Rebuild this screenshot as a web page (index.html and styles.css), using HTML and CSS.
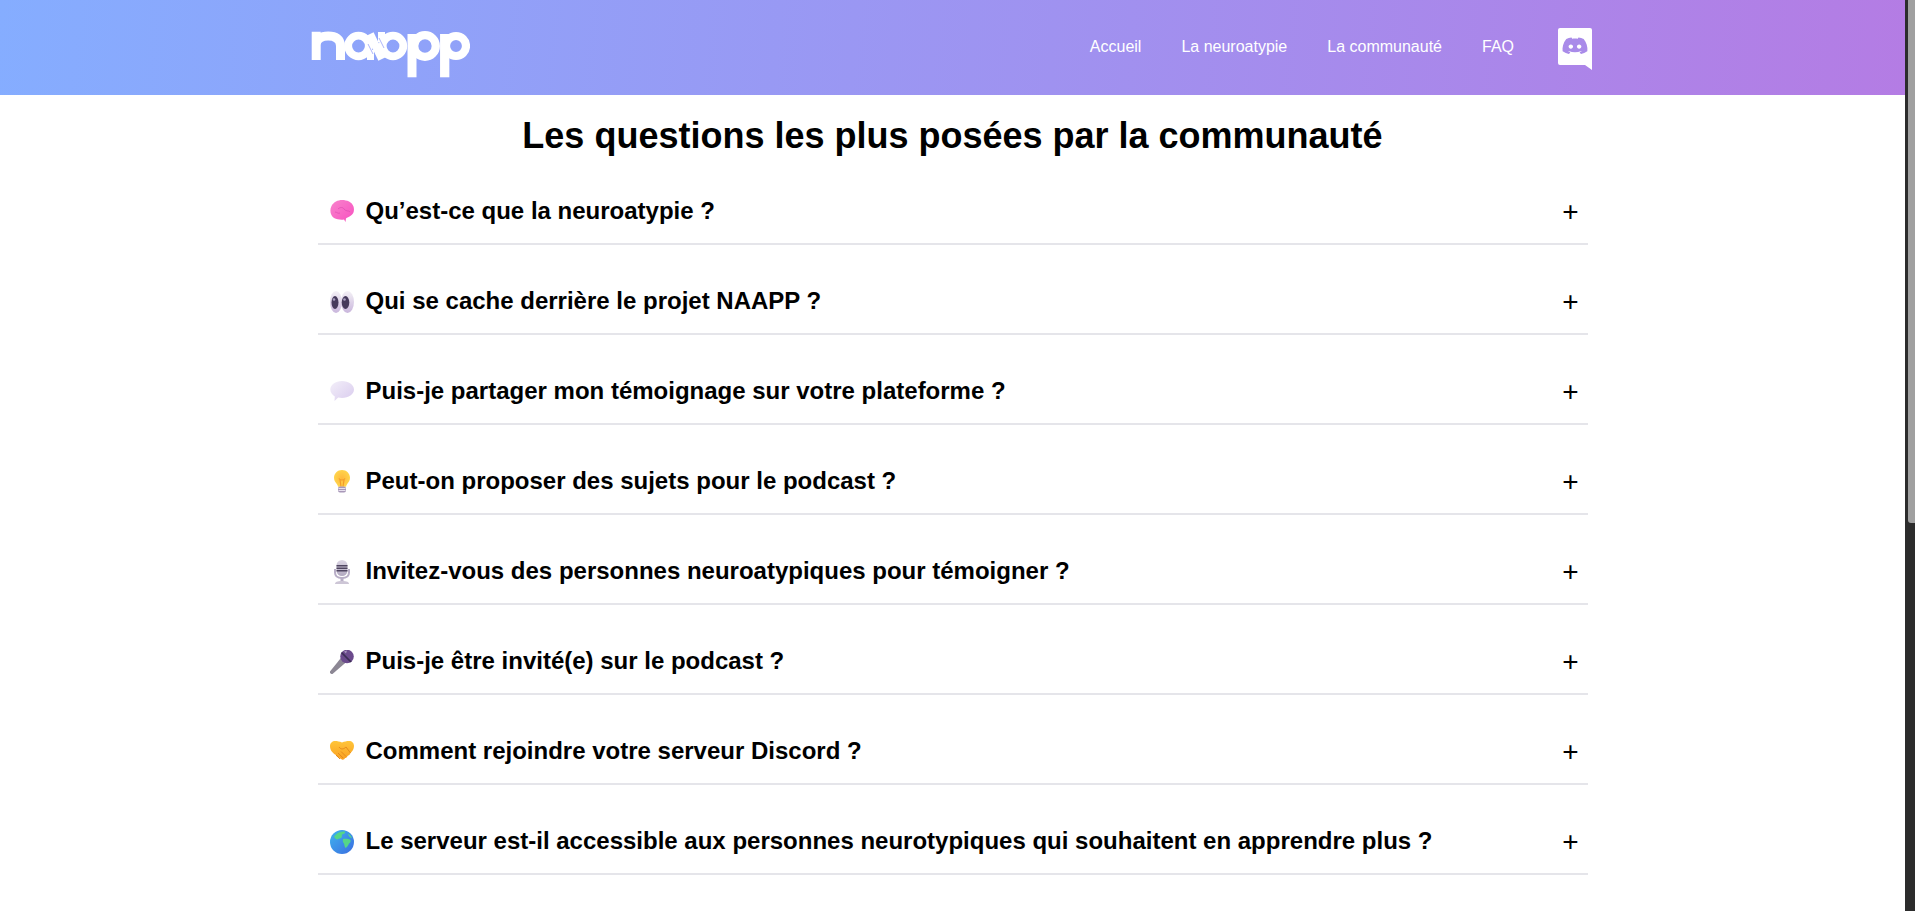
FILE: index.html
```html
<!DOCTYPE html>
<html lang="fr">
<head>
<meta charset="utf-8">
<title>NAAPP - FAQ</title>
<link rel="stylesheet" href="styles.css">
</head>
<body>
<svg class="defs" width="0" height="0" aria-hidden="true">
  <defs>
    <linearGradient id="gBrain" x1="0" y1="0" x2="1" y2="1"><stop offset="0" stop-color="#f884cc"/><stop offset="1" stop-color="#f850c0"/></linearGradient>
    <linearGradient id="gEye" x1="0" y1="0" x2="0" y2="1"><stop offset="0" stop-color="#f4f1f6"/><stop offset="1" stop-color="#c9b6dc"/></linearGradient>
    <linearGradient id="gBubble" x1="0" y1="0" x2="1" y2="1"><stop offset="0" stop-color="#f3eff9"/><stop offset="1" stop-color="#d9cbee"/></linearGradient>
    <radialGradient id="gBulb" cx=".5" cy=".5" r=".6"><stop offset="0" stop-color="#ffb93c"/><stop offset="1" stop-color="#ffd94f"/></radialGradient>
    <linearGradient id="gMic" x1="0" y1="0" x2="0" y2="1"><stop offset="0" stop-color="#dcd6e4"/><stop offset="1" stop-color="#b1a8bf"/></linearGradient>
    <linearGradient id="gHand" x1="0" y1="0" x2="0" y2="1"><stop offset="0" stop-color="#ffc53a"/><stop offset="1" stop-color="#f99f20"/></linearGradient>
    <linearGradient id="gSea" x1="0" y1="0" x2="1" y2="1"><stop offset="0" stop-color="#3fb5ef"/><stop offset="1" stop-color="#3b6de0"/></linearGradient>
  </defs>
</svg>
<div class="page">
  <header class="site-header">
    <div class="header-inner">
      <a class="logo" href="#" aria-label="naapp">
        <svg width="160" height="48" viewBox="0 0 160 48">
          <g fill="none" stroke="#fff" stroke-width="9">
            <path d="M6.200 30V1.700M6.200 15c0-6 5-9 12-9 7.500 0 12.300 3 12.300 10V30"/>
            <circle cx="48.500" cy="16" r="10.300" stroke-width="7.800"/>
            <circle cx="83" cy="16" r="10.300" stroke-width="7.800"/>
            <path d="M60 4l12 25" stroke-width="8"/>
            <path d="M60.500 20V30" stroke-width="7"/>
            <path d="M71.500 2V12" stroke-width="7"/>
            <path d="M58 14l5 10M69 8l5 10" stroke="#97a2f8" stroke-width=".8"/>
            <circle cx="115" cy="16" r="10.800" stroke-width="8.300"/>
            <path d="M102 4V47.300"/>
            <circle cx="146" cy="16" r="10" stroke-width="8.200"/>
            <path d="M134.700 4V47.300" stroke-width="9.300"/>
          </g>
        </svg>
      </a>
      <nav class="main-nav">
        <a href="#">Accueil</a>
        <a href="#">La neuroatypie</a>
        <a href="#">La communauté</a>
        <a href="#">FAQ</a>
        <a class="discord" href="#" aria-label="Discord">
          <svg width="34" height="42" viewBox="0 0 34 42">
            <path fill="#fff" d="M2 0h30a2 2 0 0 1 2 2v40l-7-5H2a2 2 0 0 1-2-2V2a2 2 0 0 1 2-2z"/>
            <g transform="translate(4.500 7) scale(1.040 .9)">
              <path fill="#a98be9" fill-rule="evenodd" d="M20.317 4.3698a19.7913 19.7913 0 00-4.8851-1.5152.0741.0741 0 00-.0785.0371c-.211.3753-.4447.8648-.6083 1.2495-1.8447-.2762-3.68-.2762-5.4868 0-.1636-.3933-.4058-.8742-.6177-1.2495a.077.077 0 00-.0785-.037 19.7363 19.7363 0 00-4.8852 1.515.0699.0699 0 00-.0321.0277C.5334 9.0458-.319 13.5799.0992 18.0578a.0824.0824 0 00.0312.0561c2.0528 1.5076 4.0413 2.4228 5.9929 3.0294a.0777.0777 0 00.0842-.0276c.4616-.6304.8731-1.2952 1.226-1.9942a.076.076 0 00-.0416-.1057c-.6528-.2476-1.2743-.5495-1.8722-.8923a.077.077 0 01-.0076-.1277c.1258-.0943.2517-.1923.3718-.2914a.0743.0743 0 01.0776-.0105c3.9278 1.7933 8.18 1.7933 12.0614 0a.0739.0739 0 01.0785.0095c.1202.099.246.1981.3728.2924a.077.077 0 01-.0066.1276 12.2986 12.2986 0 01-1.873.8914.0766.0766 0 00-.0407.1067c.3604.698.7719 1.3628 1.225 1.9932a.076.076 0 00.0842.0286c1.961-.6067 3.9495-1.5219 6.0023-3.0294a.077.077 0 00.0313-.0552c.5004-5.177-.8382-9.6739-3.5485-13.6604a.061.061 0 00-.0312-.0286zM8.02 15.3312c-1.1825 0-2.1569-1.0857-2.1569-2.419 0-1.3332.9555-2.4189 2.157-2.4189 1.2108 0 2.1757 1.0952 2.1568 2.419 0 1.3332-.9555 2.4189-2.1569 2.4189zm7.9748 0c-1.1825 0-2.1569-1.0857-2.1569-2.419 0-1.3332.9554-2.4189 2.1569-2.4189 1.2108 0 2.1757 1.0952 2.1568 2.419 0 1.3332-.946 2.4189-2.1568 2.4189Z"/>
            </g>
          </svg>
        </a>
      </nav>
    </div>
  </header>
  <main class="faq">
    <h1 class="faq-title">Les questions les plus posées par la communauté</h1>
    <div class="faq-list">
      <div class="faq-item">
        <span class="faq-question">
          <svg class="emoji" viewBox="0 0 24 24"><path fill="url(#gBrain)" d="M1.500 6C3.500 2 8 0 12 0c5 0 10 2 11.500 6.500 1 3 .5 7-2.500 9-2 1.500-4 2-5 3l-.5 3.500-1.500-2.500c-3 .5-7 0-10-1.500C1 16-1 11 1.500 6z"/><path fill="none" stroke="#e04fb4" stroke-width=".8" d="M8 9c2-2 5-2 6 0M14 9c2 3 5 1 6 3M5 12c2 0 3 2 5 1"/></svg>
          <span>Qu’est-ce que la neuroatypie ?</span>
        </span>
        <span class="faq-plus">+</span>
      </div>
      <div class="faq-item">
        <span class="faq-question">
          <svg class="emoji" viewBox="0 0 24 24"><ellipse cx="6" cy="12" rx="6" ry="11" fill="url(#gEye)"/><ellipse cx="17.500" cy="12" rx="6.500" ry="11" fill="url(#gEye)"/><ellipse cx="5" cy="12.500" rx="3.500" ry="6.500" fill="#463a5c"/><ellipse cx="15.500" cy="12.500" rx="3.800" ry="6.500" fill="#463a5c"/><circle cx="4" cy="9.500" r="1.300" fill="#a99fc0"/><circle cx="14.500" cy="9.500" r="1.300" fill="#a99fc0"/></svg>
          <span>Qui se cache derrière le projet NAAPP ?</span>
        </span>
        <span class="faq-plus">+</span>
      </div>
      <div class="faq-item">
        <span class="faq-question">
          <svg class="emoji" viewBox="0 0 24 24"><path fill="url(#gBubble)" d="M12 1c6.500 0 12 3.800 12 8.500S18.500 18 12 18c-1.300 0-2.600-.1-3.800-.4L4.500 21l.3-4.600C2 14.800.3 12.200.3 9.500.3 4.800 5.500 1 12 1z"/></svg>
          <span>Puis-je partager mon témoignage sur votre plateforme ?</span>
        </span>
        <span class="faq-plus">+</span>
      </div>
      <div class="faq-item">
        <span class="faq-question">
          <svg class="emoji" viewBox="0 0 24 24"><path fill="url(#gBulb)" d="M12 0c4.500 0 8 3.400 8 7.800 0 2.800-1.400 4.500-2.600 6-.8 1-1.200 2-1.300 3H8c-.1-1-.6-2-1.400-3-1.200-1.500-2.600-3.200-2.600-6C4 3.400 7.500 0 12 0z"/><path fill="none" stroke="#f39a2a" stroke-width="1.200" d="M9 8.500c1 2 5 2 6 0M10 10l1 6.500M14 10l-1 6.500"/><rect x="8" y="16.500" width="8" height="6" rx="2" fill="#a898b8"/><path stroke="#e7e0ee" stroke-width="1" d="M8.500 18.500h7M8.500 20.500h7"/></svg>
          <span>Peut-on proposer des sujets pour le podcast ?</span>
        </span>
        <span class="faq-plus">+</span>
      </div>
      <div class="faq-item">
        <span class="faq-question">
          <svg class="emoji" viewBox="0 0 24 24"><path fill="none" stroke="#b8aec6" stroke-width="2" d="M5 9v3.500c0 3.500 2 5.500 7 5.500s7-2 7-5.500V9"/><rect x="6.500" y="0" width="11" height="16" rx="5.500" fill="url(#gMic)"/><path fill="#4f4560" d="M6.500 5h11v1.500h-11zM6.500 7.500h11V9h-11zM6.500 10h11v1.500h-11z"/><rect x="10.500" y="17" width="3" height="4" fill="#b8aec6"/><path fill="#cdc6d6" d="M5 24c0-2 2-3 7-3s7 1 7 3z"/></svg>
          <span>Invitez-vous des personnes neuroatypiques pour témoigner ?</span>
        </span>
        <span class="faq-plus">+</span>
      </div>
      <div class="faq-item">
        <span class="faq-question">
          <svg class="emoji" viewBox="0 0 24 24"><path fill="#8c8794" d="M0 21.500L12.500 6l5 5L2.500 24c-1.200.5-3-1-2.500-2.500z"/><circle cx="17" cy="6.500" r="6.800" fill="#6b4a8c"/><path stroke="#3c2d55" stroke-width="1.700" d="M11.500 2.500l9.500 9.500"/><path fill="#a896bd" d="M14 1.500l3-1-1 3z"/></svg>
          <span>Puis-je être invité(e) sur le podcast ?</span>
        </span>
        <span class="faq-plus">+</span>
      </div>
      <div class="faq-item">
        <span class="faq-question">
          <svg class="emoji" viewBox="0 0 24 24"><path fill="url(#gHand)" d="M5 1c2.500 0 4.500.5 7 1.500C14.500 1.500 16.500 1 19 1c3 0 5 2 5 5 0 3-1.500 5-3.500 7-.5 2-2 2.500-3 3-.5 1.500-1.500 2-2.500 2-.5 1.500-2 2-3 1.500-1.500-.5-2-1.500-3-2-1.500 0-2.500-1-3-2.500C3.500 13.500 0 11 0 6 0 3 2.500 1 5 1z"/><path fill="none" stroke="#e58a1c" stroke-width="1" d="M9 7c2 3 5 2 7 0l4.500 6M8 13l5 5M11 11.500l5 5M6 15l4 4"/></svg>
          <span>Comment rejoindre votre serveur Discord ?</span>
        </span>
        <span class="faq-plus">+</span>
      </div>
      <div class="faq-item">
        <span class="faq-question">
          <svg class="emoji" viewBox="0 0 24 24"><circle cx="12" cy="12" r="12" fill="url(#gSea)"/><path fill="#55d688" d="M6 4.500c2-2.500 6-3.500 9-3 .5 1.500-1 2.500-3 3-.5 1.500.5 2.500-1 3.500-2 .5-3 1-4 1.500-1-.5-2.500-1.500-3-3zM13 9c3-.5 6 0 7.500 1 .5 2-.5 3-1.500 3.500-.8 2-2 3.500-3.500 4.500-1-1-1-3-1.500-4.500-1-.5-1.500-2.500-1-4.500zM18 3.500c1.500.8 3 2.500 4 4.500-1.500 0-3.500-1.500-4-4.500z"/></svg>
          <span>Le serveur est-il accessible aux personnes neurotypiques qui souhaitent en apprendre plus ?</span>
        </span>
        <span class="faq-plus">+</span>
      </div>
    </div>
  </main>
</div>
<div class="scroll-track"><div class="scroll-thumb"></div></div>
</body>
</html>
```

FILE: styles.css
```css
* { box-sizing: border-box; }
html, body { height: 100%; }
body {
  margin: 0;
  display: flex;
  overflow: hidden;
  background: #fff;
  color: #000;
  font-family: "Liberation Sans", Arial, sans-serif;
}
.defs { position: absolute; }
.page { flex: 1; min-width: 0; }
.site-header {
  height: 95px;
  background: linear-gradient(95deg, #85adff 0%, #b47ce4 100%);
}
.header-inner {
  width: 1290px;
  height: 100%;
  margin: 0 auto;
  display: flex;
  align-items: center;
  justify-content: space-between;
  padding-left: 2px;
  padding-right: 5.5px;
}
.logo { display: block; height: 48px; margin-top: 13px; }
.logo svg { display: block; }
.main-nav { display: flex; align-items: center; gap: 40px; margin-top: -2px; }
.main-nav a { color: #fff; text-decoration: none; font-size: 16px; }
.main-nav .discord { display: block; height: 42px; margin-left: 4px; margin-top: 5px; }
.discord svg { display: block; }
.faq { width: 1270px; margin: 0 auto; }
.faq-title {
  margin: 21px 0 -1px;
  text-align: center;
  font-size: 36px;
  line-height: 40px;
  font-weight: 700;
}
.faq-item {
  height: 90px;
  padding: 0 12px 19px;
  display: flex;
  align-items: flex-end;
  justify-content: space-between;
  border-bottom: 2px solid #e5e5ea;
}
.faq-question {
  display: flex;
  align-items: center;
  gap: 12px;
  font-size: 24px;
  font-weight: 700;
  line-height: 26px;
}
.emoji { width: 24px; height: 24px; flex: none; transform: translateY(1px); }
.faq-plus { font-size: 28px; font-weight: 400; line-height: 30px; margin-right: -3px; margin-bottom: -3px; }
.scroll-track { flex: none; width: 10px; height: 100vh; background: #2c2c2c; padding-left: 3px; }
.scroll-thumb { height: 523px; background: #a0a0a0; border-bottom-left-radius: 3px; }
```
